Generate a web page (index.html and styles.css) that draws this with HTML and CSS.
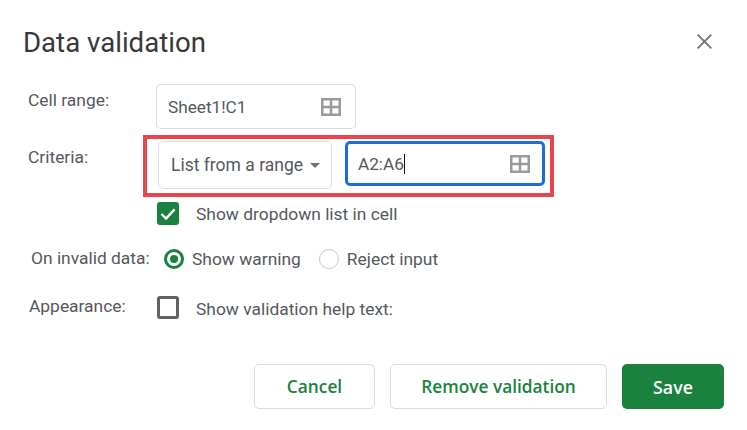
FILE: index.html
```html
<!DOCTYPE html>
<html lang="en">
<head>
<meta charset="utf-8">
<title>Data validation</title>
<link rel="stylesheet" href="styles.css">
</head>
<body>
<main class="dialog">
  <header class="head">
    <h1 class="title">Data validation</h1>
    <svg class="close" viewBox="0 0 15 15" aria-label="Close"><path d="M.7.7l13.6 13.6M14.3.7L.7 14.3"/></svg>
  </header>

  <div class="row row-range">
    <span class="label label-range">Cell range:</span>
    <div class="field field-range">
      <span class="value">Sheet1!C1</span>
      <svg class="grid" viewBox="0 0 20 18"><path d="M1.25 1.25h17.5v15.5H1.25zM1.25 9h17.5M10 1.25v15.5"/></svg>
    </div>
  </div>

  <div class="row row-criteria">
    <span class="label label-criteria">Criteria:</span>
    <div class="highlight">
      <div class="select">
        <span>List from a range</span>
        <span class="caret"></span>
      </div>
      <div class="field field-active">
        <span class="value value-cursor">A2:A6</span>
        <svg class="grid" viewBox="0 0 20 18"><path d="M1.25 1.25h17.5v15.5H1.25zM1.25 9h17.5M10 1.25v15.5"/></svg>
      </div>
    </div>
  </div>

  <div class="row row-dropdown">
    <span class="check check-on">
      <svg viewBox="0 0 22 23"><path d="M4.5 12l4.6 4.6L17.6 7.4"/></svg>
    </span>
    <span class="check-text">Show dropdown list in cell</span>
  </div>

  <div class="row row-invalid">
    <span class="label label-invalid">On invalid data:</span>
    <span class="radio radio-on"></span>
    <span class="radio-text">Show warning</span>
    <span class="radio"></span>
    <span class="radio-text">Reject input</span>
  </div>

  <div class="row row-appearance">
    <span class="label label-appearance">Appearance:</span>
    <span class="check"></span>
    <span class="check-text check-text-low">Show validation help text:</span>
  </div>

  <footer class="actions">
    <button class="btn btn-cancel">Cancel</button>
    <button class="btn btn-remove">Remove validation</button>
    <button class="btn btn-save">Save</button>
  </footer>
</main>
</body>
</html>
```

FILE: styles.css
```css
* { box-sizing: border-box; }
html, body { margin: 0; height: 100%; background: #fff; }
body {
  width: 747px;
  height: 430px;
  overflow: hidden;
  font-family: Roboto, "Liberation Sans", sans-serif;
  font-size: 17.4px;
  color: #55585c;
}
.dialog { display: flex; flex-direction: column; height: 430px; }

.head {
  display: flex;
  justify-content: space-between;
  align-items: center;
  height: 44px;
  margin-top: 20px;
  padding: 0 35px 0 23px;
}
.title { margin: 1px 0 0; font-size: 27.6px; font-weight: 400; color: #36383b; line-height: 44px; }
.close { width: 15px; height: 15px; margin-top: -1px; }
.close path { fill: none; stroke: #757575; stroke-width: 1.9; }

.row { display: flex; align-items: center; }
.label { flex: none; font-size: 17.4px; }

.row-range { margin-top: 20px; padding-left: 28px; height: 45px; align-items: flex-start; }
.label-range { width: 128px; line-height: 33px; }
.field {
  display: flex;
  align-items: center;
  justify-content: space-between;
  background: #fff;
}
.field-range {
  width: 200px;
  height: 45px;
  border: 1px solid #dadce0;
  border-radius: 5px;
  padding: 0 14px 0 11px;
}
.value { font-size: 17.2px; }
.grid { width: 20px; height: 18px; flex: none; }
.grid path { fill: none; stroke: #9a9a9a; stroke-width: 2.5; }

.row-criteria { margin-top: 6px; padding-left: 28px; height: 62px; align-items: flex-start; }
.label-criteria { width: 115px; line-height: 45px; }
.highlight {
  display: flex;
  align-items: flex-start;
  gap: 13px;
  width: 411px;
  height: 62px;
  border: 4px solid #e8464f;
  padding: 2px 0 0 11px;
}
.select {
  display: flex;
  align-items: center;
  width: 174px;
  height: 48px;
  flex: none;
  border: 1px solid #dadce0;
  border-radius: 5px;
  padding-left: 12px;
  font-size: 17.5px;
}
.caret {
  width: 0;
  height: 0;
  margin-left: 7px;
  border: 5px solid transparent;
  border-top-color: #6f7276;
  border-bottom: 0;
}
.field-active {
  width: 200px;
  height: 45px;
  flex: none;
  border: 3px solid #1a6fd6;
  border-radius: 5px;
  padding: 0 11px 0 9px;
}
.field-active .grid { margin-right: 1px; }
.value-cursor { border-right: 1px solid #111; line-height: 20px; height: 20px; margin-left: 1px; }

.row-dropdown { margin-top: 5px; padding-left: 157px; height: 23px; }
.check {
  flex: none;
  width: 22px;
  height: 23px;
  border: 3px solid #5f6368;
  border-radius: 3px;
  background: #fff;
}
.check-on { border: 0; background: #1b813e; }
.check-on svg { display: block; width: 22px; height: 23px; }
.check-on path { fill: none; stroke: #fff; stroke-width: 2.4; }
.check-text { margin: 1px 0 0 17px; }
.check-text-low { margin-top: 2px; }

.row-invalid { margin-top: 23px; padding-left: 31px; height: 21px; }
.label-invalid { width: 133px; margin-top: -1px; }
.radio {
  flex: none;
  width: 20px;
  height: 20px;
  border: 1px solid #c6c8cb;
  border-radius: 50%;
  background: #fff;
}
.radio-on {
  border: 3px solid #1b813e;
  padding: 3px;
  background: #1b813e content-box;
}
.radio-text { margin: 0 18px 0 8px; }

.row-appearance { margin-top: 27px; padding-left: 29px; height: 23px; }
.label-appearance { width: 128px; margin-top: -3px; }

.actions {
  display: flex;
  margin-top: 45px;
  padding-left: 254px;
}
.btn {
  height: 45px;
  border: 1px solid #dadce0;
  border-radius: 5px;
  background: #fff;
  color: #1b813e;
  font-family: "Open Sans", Roboto, sans-serif;
  font-size: 17.3px;
  font-weight: 600;
  padding: 0;
}
.btn-cancel { width: 121px; margin-right: 15px; }
.btn-remove { width: 217px; margin-right: 15px; }
.btn-save { width: 102px; border: 0; background: #1b813e; color: #fff; font-size: 17.8px; }
```
